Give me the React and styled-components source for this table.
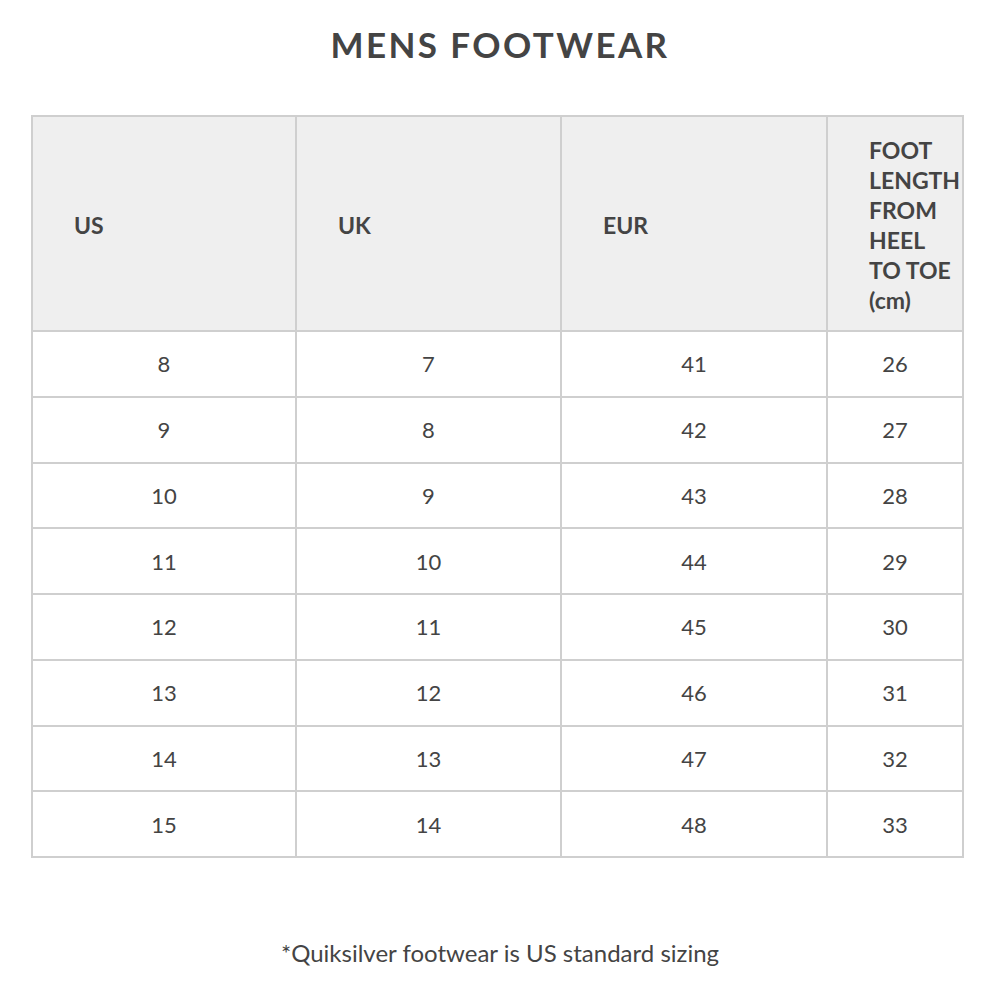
import styled, { createGlobalStyle } from 'styled-components';

const GlobalStyle = createGlobalStyle`
  body {
    margin: 0;
    background: #fff;
    font-family: Lato, "Open Sans", sans-serif;
    color: #444;
  }
`;

const Page = styled.div`
  width: 1000px;
  height: 1000px;
  display: flex;
  flex-direction: column;
  align-items: center;
`;

const Title = styled.h1`
  margin: 24px 0 0;
  font-family: Lato, sans-serif;
  font-weight: 700;
  font-size: 35px;
  letter-spacing: 2.4px;
  color: #444;
  line-height: 40px;
`;

const Table = styled.table`
  margin: 51px 0 0 -5px;
  border-collapse: collapse;
  table-layout: fixed;
  width: 931px;
  border: 2px solid #cfcfcf;
`;

const HeadCell = styled.th`
  background: #efefef;
  border: 2px solid #cfcfcf;
  height: 211px;
  padding: 2px 0 0 41px;
  text-align: left;
  font-size: 23px;
  font-weight: 700;
  line-height: 30px;
  color: #444;
  white-space: nowrap;
  overflow: visible;
`;

const Cell = styled.td`
  border: 2px solid #cfcfcf;
  height: 63.75px;
  padding: 0;
  text-align: center;
  font-size: 22px;
  color: #444;
`;

const Note = styled.p`
  margin: 80px 0 0;
  font-size: 24px;
  color: #444;
`;

const rows = [
  [8, 7, 41, 26],
  [9, 8, 42, 27],
  [10, 9, 43, 28],
  [11, 10, 44, 29],
  [12, 11, 45, 30],
  [13, 12, 46, 31],
  [14, 13, 47, 32],
  [15, 14, 48, 33],
];

const App = () => (
  <>
    <GlobalStyle />
    <Page>
      <Title>MENS FOOTWEAR</Title>
      <Table>
        <colgroup>
          <col style={{ width: 264 }} />
          <col style={{ width: 265 }} />
          <col style={{ width: 266 }} />
          <col style={{ width: 136 }} />
        </colgroup>
        <thead>
          <tr>
            <HeadCell>US</HeadCell>
            <HeadCell>UK</HeadCell>
            <HeadCell>EUR</HeadCell>
            <HeadCell>
              FOOT<br />LENGTH<br />FROM<br />HEEL<br />TO TOE<br />(cm)
            </HeadCell>
          </tr>
        </thead>
        <tbody>
          {rows.map((r) => (
            <tr key={r[0]}>
              {r.map((v, i) => (
                <Cell key={i}>{v}</Cell>
              ))}
            </tr>
          ))}
        </tbody>
      </Table>
      <Note>*Quiksilver footwear is US standard sizing</Note>
    </Page>
  </>
);

export default App;
